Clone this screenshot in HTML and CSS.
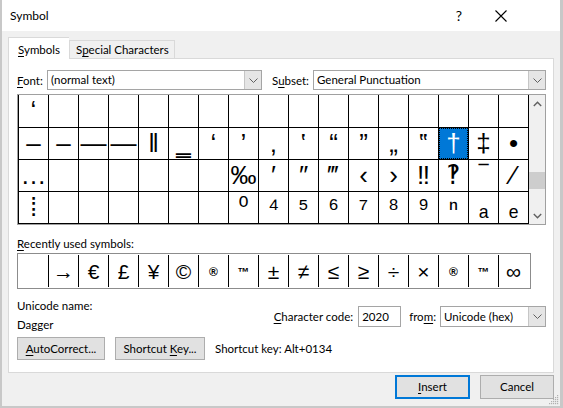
FILE: index.html
```html
<!DOCTYPE html>
<html>
<head>
<meta charset="utf-8">
<link rel="stylesheet" href="styles.css">
</head>
<body>
<div class="window">
  <div class="titlebar">
    <span class="title">Symbol</span>
    <span class="help">?</span>
    <span class="close"><svg width="12" height="12" viewBox="0 0 12 12"><path d="M0.5 0.5L11.5 11.5M11.5 0.5L0.5 11.5" stroke="#000" stroke-width="1.1" fill="none"/></svg></span>
  </div>
  <div class="tabs">
    <div class="tab active"><u>S</u>ymbols</div>
    <div class="tab">S<u>p</u>ecial Characters</div>
  </div>
  <div class="panel">
    <div class="fontrow">
      <span class="lbl font-lbl"><u>F</u>ont:</span>
      <div class="combo font-combo"><span class="combo-text">(normal text)</span><span class="combo-btn"><svg width="9" height="5" viewBox="0 0 9 5"><path d="M0.5 0.5L4.5 4.5L8.5 0.5" stroke="#606060" fill="none"/></svg></span></div>
      <span class="lbl subset-lbl">S<u>u</u>bset:</span>
      <div class="combo subset-combo"><span class="combo-text">General Punctuation</span><span class="combo-btn"><svg width="9" height="5" viewBox="0 0 9 5"><path d="M0.5 0.5L4.5 4.5L8.5 0.5" stroke="#606060" fill="none"/></svg></span></div>
    </div>
    <div class="charbox">
      <div class="chargrid">
        <div class="c">‘</div><div class="c"></div><div class="c"></div><div class="c"></div><div class="c"></div><div class="c"></div><div class="c"></div><div class="c"></div><div class="c"></div><div class="c"></div><div class="c"></div><div class="c"></div><div class="c"></div><div class="c"></div><div class="c"></div><div class="c"></div><div class="c"></div>
        <div class="c">‒</div><div class="c">–</div><div class="c">—</div><div class="c">―</div><div class="c">‖</div><div class="c">‗</div><div class="c">‘</div><div class="c">’</div><div class="c">‚</div><div class="c">‛</div><div class="c">“</div><div class="c">”</div><div class="c">„</div><div class="c">‟</div><div class="c sel">†</div><div class="c">‡</div><div class="c">•</div>
        <div class="c">…</div><div class="c"></div><div class="c"></div><div class="c"></div><div class="c"></div><div class="c"></div><div class="c"></div><div class="c">‰</div><div class="c">′</div><div class="c">″</div><div class="c">‴</div><div class="c">‹</div><div class="c">›</div><div class="c">‼</div><div class="c">‽</div><div class="c">‾</div><div class="c">⁄</div>
        <div class="c">⁞</div><div class="c"></div><div class="c"></div><div class="c"></div><div class="c"></div><div class="c"></div><div class="c"></div><div class="c">⁰</div><div class="c">⁴</div><div class="c">⁵</div><div class="c">⁶</div><div class="c">⁷</div><div class="c">⁸</div><div class="c">⁹</div><div class="c">ⁿ</div><div class="c">ₐ</div><div class="c">ₑ</div>
      </div>
      <div class="scrollbar">
        <div class="sb-btn"><svg width="9" height="6" viewBox="0 0 9 6"><path d="M0.8 5L4.5 1.3L8.2 5" stroke="#606060" stroke-width="1.4" fill="none"/></svg></div>
        <div class="sb-track"><div class="sb-thumb"></div></div>
        <div class="sb-btn"><svg width="9" height="6" viewBox="0 0 9 6"><path d="M0.8 1L4.5 4.7L8.2 1" stroke="#606060" stroke-width="1.4" fill="none"/></svg></div>
      </div>
    </div>
    <div class="recent-lbl"><u>R</u>ecently used symbols:</div>
    <div class="recent">
      <div class="r"></div><div class="r">→</div><div class="r">€</div><div class="r">£</div><div class="r">¥</div><div class="r">©</div><div class="r"><span class="sm">®</span></div><div class="r"><span class="sm">™</span></div><div class="r">±</div><div class="r">≠</div><div class="r">≤</div><div class="r">≥</div><div class="r">÷</div><div class="r">×</div><div class="r"><span class="sm">®</span></div><div class="r"><span class="sm">™</span></div><div class="r">∞</div>
    </div>
    <div class="info">
      <div class="names">
        <div class="name-line">Unicode name:</div>
        <div class="name-line">Dagger</div>
      </div>
      <div class="coderow">
        <span class="lbl"><u>C</u>haracter code:</span>
        <div class="input">2020</div>
        <span class="lbl from-lbl">fro<u>m</u>:</span>
        <div class="combo from-combo"><span class="combo-text">Unicode (hex)</span><span class="combo-btn"><svg width="9" height="5" viewBox="0 0 9 5"><path d="M0.5 0.5L4.5 4.5L8.5 0.5" stroke="#606060" fill="none"/></svg></span></div>
      </div>
    </div>
    <div class="btnrow">
      <div class="btn autocorrect"><u>A</u>utoCorrect...</div>
      <div class="btn shortcut">Shortcut <u>K</u>ey...</div>
      <span class="shortcut-text">Shortcut key: Alt+0134</span>
    </div>
  </div>
  <div class="footer">
    <div class="btn insert"><u>I</u>nsert</div>
    <div class="btn cancel">Cancel</div>
  </div>
  <svg class="grip" width="11" height="11" viewBox="0 0 11 11"><g fill="#b0b0b0"><rect x="9" y="1" width="1.2" height="1.2"/><rect x="7" y="3" width="1.2" height="1.2"/><rect x="9" y="3" width="1.2" height="1.2"/><rect x="5" y="5" width="1.2" height="1.2"/><rect x="7" y="5" width="1.2" height="1.2"/><rect x="9" y="5" width="1.2" height="1.2"/><rect x="3" y="7" width="1.2" height="1.2"/><rect x="5" y="7" width="1.2" height="1.2"/><rect x="7" y="7" width="1.2" height="1.2"/><rect x="9" y="7" width="1.2" height="1.2"/><rect x="1" y="9" width="1.2" height="1.2"/><rect x="3" y="9" width="1.2" height="1.2"/><rect x="5" y="9" width="1.2" height="1.2"/><rect x="7" y="9" width="1.2" height="1.2"/><rect x="9" y="9" width="1.2" height="1.2"/></g></svg>
</div>
</body>
</html>
```

FILE: styles.css
```css
* { box-sizing: border-box; margin: 0; padding: 0; }
html, body { width: 563px; height: 408px; overflow: hidden; }
body {
  background: #f0f0f0;
  font-family: Lato, "Liberation Sans", sans-serif;
  font-size: 11.5px;
  color: #000;
}
u { text-decoration: underline; text-underline-offset: 2px; }

.window {
  width: 563px;
  height: 408px;
  border-left: 2px solid #c8c8c8;
  border-right: 3px solid #c8c8c8;
  border-bottom: 2px solid #c8c8c8;
  display: flex;
  flex-direction: column;
  position: relative;
  background: #f0f0f0;
}

.titlebar {
  height: 31px;
  flex: none;
  background: #fff;
  display: flex;
  align-items: center;
  padding-left: 8px;
  padding-right: 49px;
}
.title { flex: 1; font-size: 12px; }
.help { width: 20px; text-align: center; font-size: 14px; }
.close { width: 20px; margin-left: 22px; display: flex; justify-content: center; }

.tabs {
  height: 27px;
  flex: none;
  display: flex;
  align-items: flex-end;
  padding-left: 6px;
}
.tab {
  height: 18px;
  border: 1px solid #d9d9d9;
  border-bottom: none;
  padding: 0 5px 0 6px;
  line-height: 17px;
  background: #f0f0f0;
}
.tab.active {
  height: 22px;
  margin-bottom: -1px;
  position: relative;
  z-index: 1;
  background: #fff;
  padding: 0 9px 0 9px;
  line-height: 23px;
  border-right: none;
}

.panel {
  height: 315px;
  flex: none;
  margin: 0 6px;
  background: #fff;
  border: 1px solid #d9d9d9;
  padding: 11px 7px 0 8px;
  display: flex;
  flex-direction: column;
}

.fontrow { display: flex; align-items: center; height: 20px; }
.lbl { white-space: nowrap; }
.font-lbl { width: 30px; }
.subset-lbl { margin-left: 10px; width: 41px; }
.combo {
  height: 20px;
  border: 1px solid #a5a5a5;
  background: #fff;
  display: flex;
  align-items: stretch;
}
.combo-text { flex: 1; padding-left: 3px; line-height: 18px; white-space: nowrap; }
.combo-btn {
  width: 17px;
  background: #e5e5e5;
  border-left: 1px solid #c6c6c6;
  display: flex;
  align-items: center;
  justify-content: center;
}
.font-combo { width: 215px; }
.subset-combo { flex: 1; }

.charbox {
  margin-top: 4px;
  display: flex;
  border: 1px solid #a0a0a0;
  width: 529px;
}
.chargrid {
  display: grid;
  grid-template-columns: repeat(17, 29px);
  grid-template-rows: 32px repeat(3, 31px);
  gap: 1px;
  background: #000;
  padding: 0 1px 1px 1px;
}
.c {
  background: #fff;
  font-family: "Liberation Sans", "DejaVu Sans", sans-serif;
  font-size: 26px;
  line-height: 31px;
  text-align: center;
  overflow: hidden;
  white-space: nowrap;
}
.c.sel {
  background: #0078d7;
  color: #fff;
  outline: 1px dotted #000;
  outline-offset: -1px;
}
.scrollbar {
  width: 16px;
  background: #f0f0f0;
  display: flex;
  flex-direction: column;
}
.sb-btn { height: 17px; display: flex; align-items: center; justify-content: center; }
.sb-track { flex: 1; }
.sb-thumb { margin-top: 60px; height: 17px; background: #cdcdcd; }

.recent-lbl { margin-top: 11px; line-height: 15px; }
.recent {
  margin-top: 2px;
  display: flex;
  width: 514px;
  height: 36px;
  border: 1px solid #8c8c8c;
  padding: 1px 2px 1px 0;
}
.r {
  width: 30px;
  height: 32px;
  border-left: 1px solid #000;
  text-align: center;
  font-family: "Liberation Sans", "DejaVu Sans", sans-serif;
  font-size: 21px;
  line-height: 34px;
}
.r:first-child { border-left: none; }
.sm { font-size: 12px; font-weight: bold; vertical-align: 12px; }

.info {
  margin-top: 7px;
  display: flex;
  justify-content: space-between;
  align-items: flex-start;
}
.name-line { line-height: 19px; }
.coderow { margin-top: 10px; display: flex; align-items: center; height: 21px; }
.input {
  width: 43px;
  height: 21px;
  margin-left: 5px;
  border: 1px solid #a5a5a5;
  background: #fff;
  padding-left: 3px;
  line-height: 19px;
}
.from-lbl { margin-left: 8px; }
.from-combo { width: 106px; height: 21px; margin-left: 4px; }
.from-combo .combo-text { line-height: 19px; }

.btnrow { margin-top: 3px; display: flex; align-items: center; }
.btn {
  height: 23px;
  background: #e1e1e1;
  border: 1px solid #adadad;
  text-align: center;
  line-height: 21px;
  white-space: nowrap;
}
.autocorrect { width: 88px; }
.shortcut { width: 90px; margin-left: 10px; }
.shortcut-text { margin-left: 10px; }

.footer {
  flex: 1;
  display: flex;
  justify-content: flex-end;
  align-items: flex-start;
  padding: 2px 6px 0 0;
}
.insert { width: 75px; height: 24px; border: 2px solid #0078d7; line-height: 20px; }
.cancel { width: 74px; height: 24px; margin-left: 10px; line-height: 22px; }

.grip { position: absolute; right: 1px; bottom: 1px; }
```
